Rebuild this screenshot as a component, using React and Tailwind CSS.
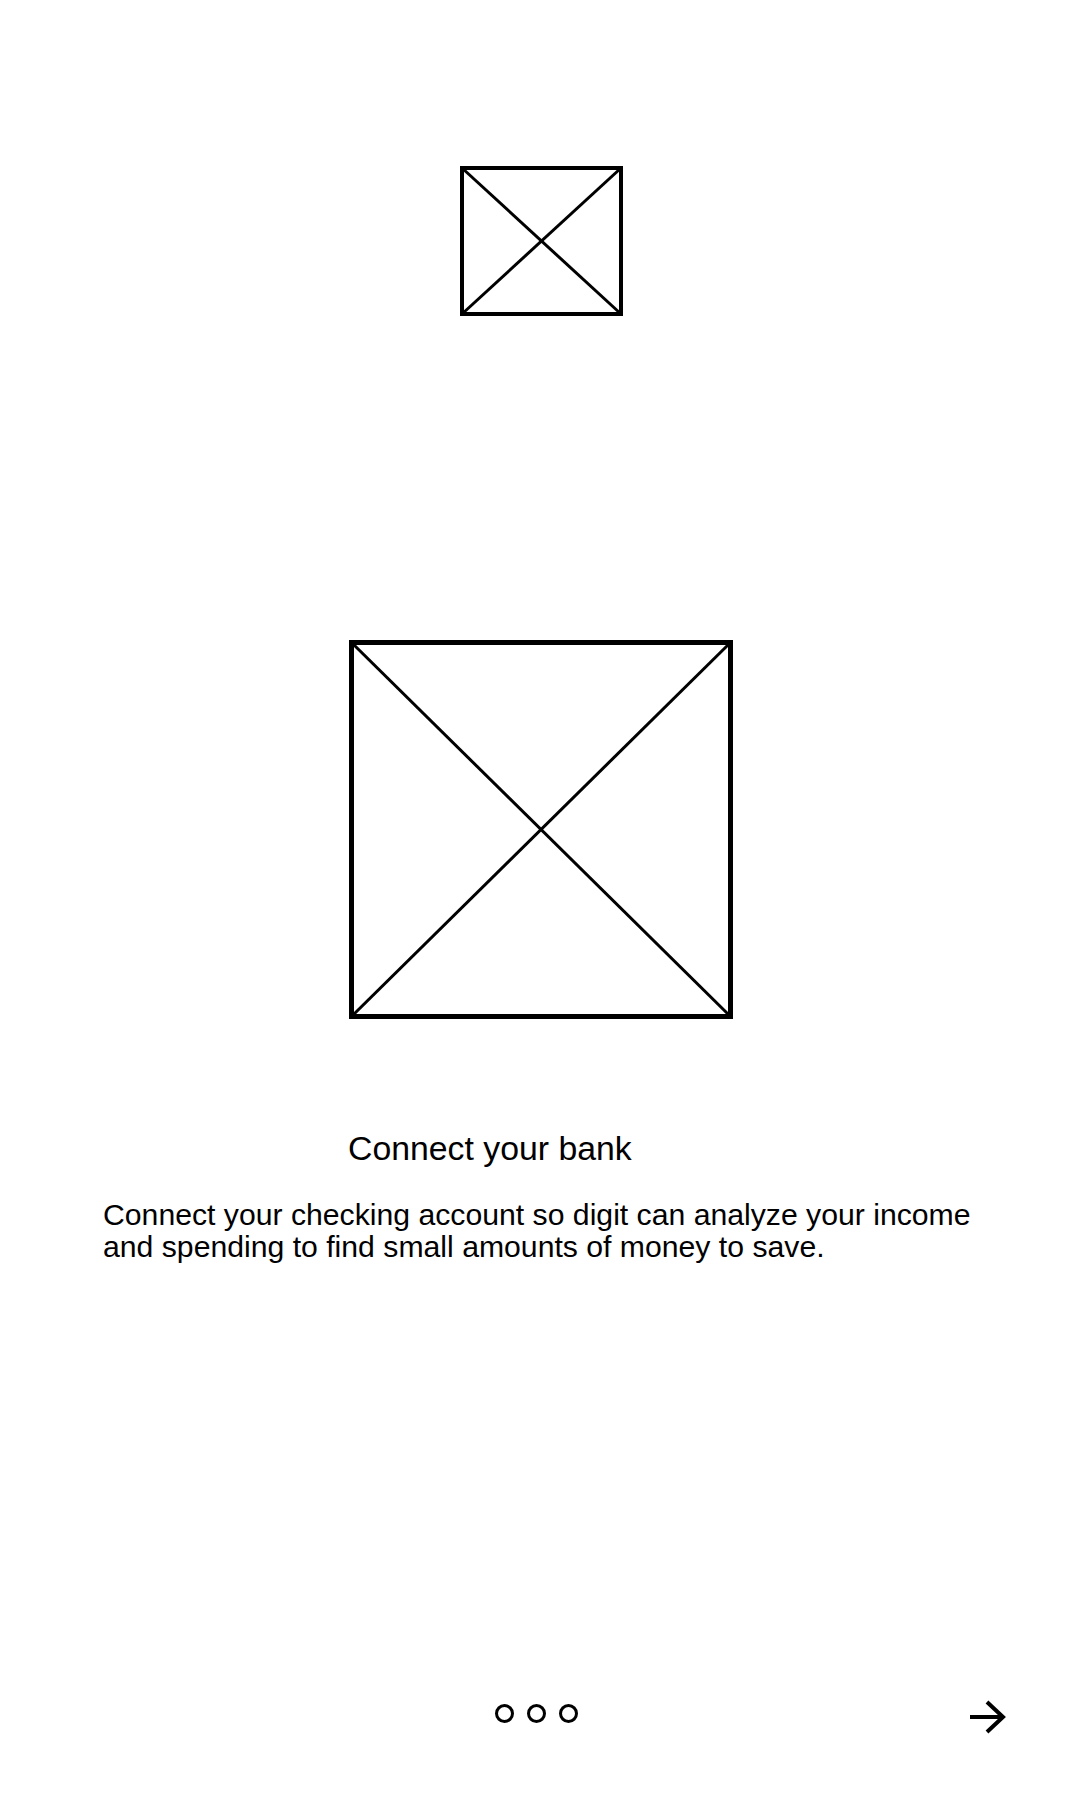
import React from "react";

function Placeholder({ w, h, border = 4, diag = 3 }) {
  const b = border / 2;
  return (
    <svg width={w} height={h} viewBox={`0 0 ${w} ${h}`} className="block">
      <line x1={b} y1={b} x2={w - b} y2={h - b} stroke="#000" strokeWidth={diag} />
      <line x1={w - b} y1={b} x2={b} y2={h - b} stroke="#000" strokeWidth={diag} />
      <rect x={b} y={b} width={w - border} height={h - border} fill="none" stroke="#000" strokeWidth={border} />
    </svg>
  );
}

export default function App() {
  return (
    <div
      className="w-[1080px] h-[1800px] bg-white text-black flex flex-col overflow-hidden"
      style={{ fontFamily: '"Liberation Sans", Arial, sans-serif' }}
    >
      <div className="flex justify-center pt-[166px] pl-[2px]">
        <Placeholder w={163} h={150} />
      </div>
      <div className="flex justify-center mt-[324px] pl-[2px]">
        <Placeholder w={384} h={379} border={5} />
      </div>
      <h1 className="mt-[109px] pl-[348px] text-[33.8px] leading-[40px] font-normal">
        Connect your bank
      </h1>
      <p className="mt-[31px] pl-[103px] pr-[40px] text-[30.2px] leading-[32px]">
        Connect your checking account so digit can analyze your income
        <br />
        and spending to find small amounts of money to save.
      </p>
      <div className="mt-auto mb-[68px] grid grid-cols-[1fr_auto_1fr] items-center h-[40px]">
        <div />
        <div className="flex items-center gap-[13px] pr-[8px]">
          <span className="block w-[19px] h-[19px] rounded-full border-[3px] border-black" />
          <span className="block w-[19px] h-[19px] rounded-full border-[3px] border-black" />
          <span className="block w-[19px] h-[19px] rounded-full border-[3px] border-black" />
        </div>
        <div className="flex justify-end pr-[74px] pt-[8px]">
          <svg width="37" height="34" viewBox="0 0 37 34" className="block">
            <line x1="1" y1="17" x2="34" y2="17" stroke="#000" strokeWidth="4" />
            <polyline points="18,2 34,17 18,32" fill="none" stroke="#000" strokeWidth="4" />
          </svg>
        </div>
      </div>
    </div>
  );
}
